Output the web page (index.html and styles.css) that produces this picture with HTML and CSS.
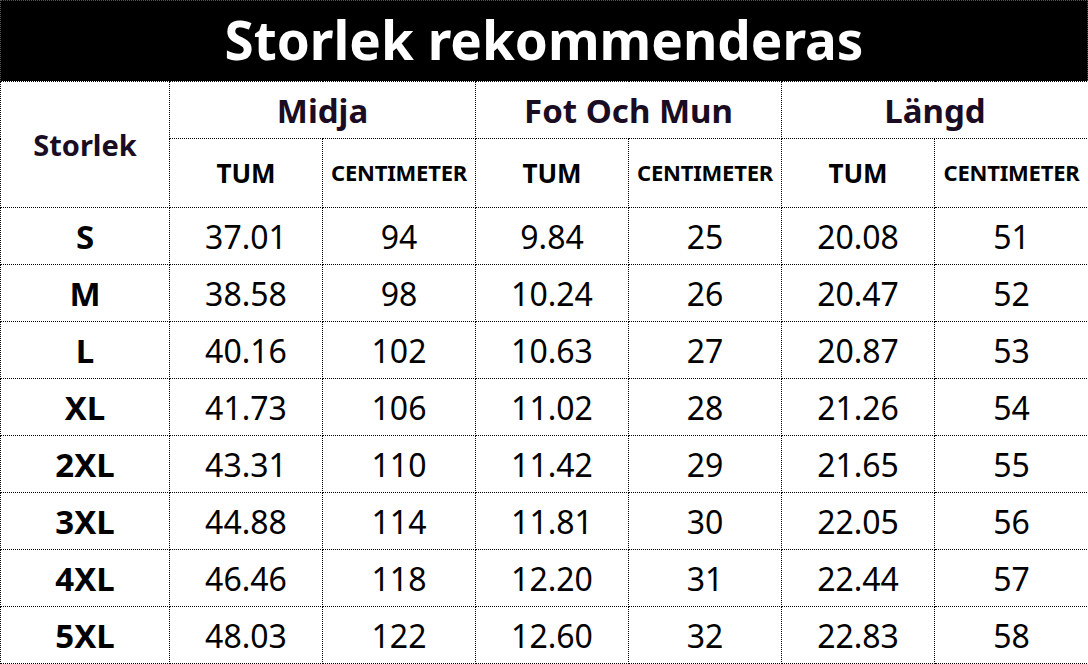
FILE: index.html
```html
<!DOCTYPE html>
<html lang="sv">
<head>
<meta charset="utf-8">
<link rel="stylesheet" href="styles.css">
</head>
<body>
<div class="sheet">
  <div class="title">Storlek rekommenderas</div>
  <table class="sizes">
    <colgroup>
      <col class="c-size"><col class="c-val"><col class="c-val"><col class="c-val"><col class="c-val"><col class="c-val"><col class="c-last">
    </colgroup>
    <thead>
      <tr class="h1">
        <th rowspan="2" class="hsize">Storlek</th>
        <th colspan="2" class="group">Midja</th>
        <th colspan="2" class="group">Fot Och Mun</th>
        <th colspan="2" class="group">Längd</th>
      </tr>
      <tr class="h2">
        <th class="unit">TUM</th><th class="unit cm">CENTIMETER</th>
        <th class="unit">TUM</th><th class="unit cm">CENTIMETER</th>
        <th class="unit">TUM</th><th class="unit cm">CENTIMETER</th>
      </tr>
    </thead>
    <tbody>
      <tr><th>S</th><td>37.01</td><td>94</td><td>9.84</td><td>25</td><td>20.08</td><td>51</td></tr>
      <tr><th>M</th><td>38.58</td><td>98</td><td>10.24</td><td>26</td><td>20.47</td><td>52</td></tr>
      <tr><th>L</th><td>40.16</td><td>102</td><td>10.63</td><td>27</td><td>20.87</td><td>53</td></tr>
      <tr><th>XL</th><td>41.73</td><td>106</td><td>11.02</td><td>28</td><td>21.26</td><td>54</td></tr>
      <tr><th>2XL</th><td>43.31</td><td>110</td><td>11.42</td><td>29</td><td>21.65</td><td>55</td></tr>
      <tr><th>3XL</th><td>44.88</td><td>114</td><td>11.81</td><td>30</td><td>22.05</td><td>56</td></tr>
      <tr><th>4XL</th><td>46.46</td><td>118</td><td>12.20</td><td>31</td><td>22.44</td><td>57</td></tr>
      <tr><th>5XL</th><td>48.03</td><td>122</td><td>12.60</td><td>32</td><td>22.83</td><td>58</td></tr>
    </tbody>
  </table>
</div>
</body>
</html>
```
FILE: styles.css
```css
html, body {
  margin: 0;
  padding: 0;
  background: #fff;
}
.sheet {
  width: 1088px;
  font-family: "Noto Sans", "Open Sans", sans-serif;
}
.title {
  box-sizing: border-box;
  height: 81px;
  background: #000;
  color: #fff;
  border: 1px dotted #555;
  border-bottom: none;
  font-size: 53px;
  font-weight: 700;
  text-align: center;
  line-height: 78px;
}
.sizes {
  width: 1088px;
  table-layout: fixed;
  border-collapse: collapse;
}
.c-size { width: 169px; }
.c-val { width: 153px; }
.c-last { width: 154px; }
.sizes th, .sizes td {
  border: 1px dotted #000;
  padding: 0;
  text-align: center;
  vertical-align: middle;
  white-space: nowrap;
  overflow: hidden;
}
.h1 { height: 57px; }
.h2 { height: 69px; }
tbody tr { height: 57px; }
.hsize {
  font-size: 29px;
  font-weight: 700;
  color: #1a0c22;
  padding-top: 2px;
}
.group {
  font-size: 33px;
  font-weight: 700;
  color: #1a0c22;
  padding-bottom: 2px;
}
.unit {
  font-size: 26px;
  font-weight: 700;
  color: #000;
}
.unit.cm {
  font-size: 22px;
  letter-spacing: -0.2px;
  padding-bottom: 2px;
}
tbody th {
  font-size: 33px;
  font-weight: 700;
  color: #000;
  padding-bottom: 3px;
}
tbody td {
  font-size: 32px;
  font-weight: 400;
  color: #000;
  padding-bottom: 3px;
}
```
